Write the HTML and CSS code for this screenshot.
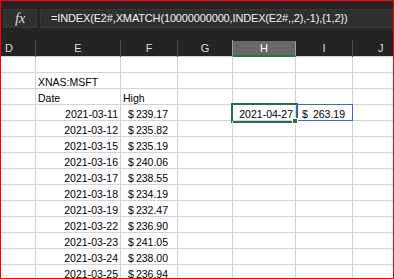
FILE: index.html
```html
<!DOCTYPE html>
<html>
<head>
<meta charset="utf-8">
<link rel="stylesheet" href="styles.css">
</head>
<body>
<div class="frame">
  <div class="formula-bar">
    <div class="fx">fx</div>
    <div class="formula">=INDEX(E2#,XMATCH(10000000000,INDEX(E2#,,2),-1),{1,2})</div>
  </div>
  <div class="sheet">
    <div class="row header">
      <div class="hc hd">D</div>
      <div class="hc">E</div>
      <div class="hc">F</div>
      <div class="hc pre-sel">G</div>
      <div class="hc sel">H</div>
      <div class="hc">I</div>
      <div class="hc hj">J</div>
    </div>
    <div class="row"><div class="c"></div><div class="c"></div><div class="c"></div><div class="c"></div><div class="c"></div><div class="c"></div><div class="c"></div></div>
    <div class="row"><div class="c"></div><div class="c left">XNAS:MSFT</div><div class="c"></div><div class="c"></div><div class="c"></div><div class="c"></div><div class="c"></div></div>
    <div class="row"><div class="c"></div><div class="c left">Date</div><div class="c left">High</div><div class="c"></div><div class="c"></div><div class="c"></div><div class="c"></div></div>
    <div class="row"><div class="c"></div><div class="c date">2021-03-11</div><div class="c acc"><span>$</span><span>239.17</span></div><div class="c"></div>
      <div class="c date active">2021-04-27<div class="sel-box"></div><div class="handle"></div></div>
      <div class="c acc spill"><span>$</span><span>263.19</span><div class="spill-box"></div></div><div class="c"></div></div>
    <div class="row"><div class="c"></div><div class="c date">2021-03-12</div><div class="c acc"><span>$</span><span>235.82</span></div><div class="c"></div><div class="c"></div><div class="c"></div><div class="c"></div></div>
    <div class="row"><div class="c"></div><div class="c date">2021-03-15</div><div class="c acc"><span>$</span><span>235.19</span></div><div class="c"></div><div class="c"></div><div class="c"></div><div class="c"></div></div>
    <div class="row"><div class="c"></div><div class="c date">2021-03-16</div><div class="c acc"><span>$</span><span>240.06</span></div><div class="c"></div><div class="c"></div><div class="c"></div><div class="c"></div></div>
    <div class="row"><div class="c"></div><div class="c date">2021-03-17</div><div class="c acc"><span>$</span><span>238.55</span></div><div class="c"></div><div class="c"></div><div class="c"></div><div class="c"></div></div>
    <div class="row"><div class="c"></div><div class="c date">2021-03-18</div><div class="c acc"><span>$</span><span>234.19</span></div><div class="c"></div><div class="c"></div><div class="c"></div><div class="c"></div></div>
    <div class="row"><div class="c"></div><div class="c date">2021-03-19</div><div class="c acc"><span>$</span><span>232.47</span></div><div class="c"></div><div class="c"></div><div class="c"></div><div class="c"></div></div>
    <div class="row"><div class="c"></div><div class="c date">2021-03-22</div><div class="c acc"><span>$</span><span>236.90</span></div><div class="c"></div><div class="c"></div><div class="c"></div><div class="c"></div></div>
    <div class="row"><div class="c"></div><div class="c date">2021-03-23</div><div class="c acc"><span>$</span><span>241.05</span></div><div class="c"></div><div class="c"></div><div class="c"></div><div class="c"></div></div>
    <div class="row"><div class="c"></div><div class="c date">2021-03-24</div><div class="c acc"><span>$</span><span>238.00</span></div><div class="c"></div><div class="c"></div><div class="c"></div><div class="c"></div></div>
    <div class="row"><div class="c"></div><div class="c date">2021-03-25</div><div class="c acc"><span>$</span><span>236.94</span></div><div class="c"></div><div class="c"></div><div class="c"></div><div class="c"></div></div>
  </div>
</div>
</body>
</html>
```
FILE: styles.css
```css
html, body {
  margin: 0;
  padding: 0;
  background: #ffffff;
}
.frame {
  width: 394px;
  height: 279px;
  box-sizing: border-box;
  border: 1px solid #ff0000;
  overflow: hidden;
  background: #232323;
  font-family: "Liberation Sans", Arial, sans-serif;
}
.formula-bar {
  height: 39px;
  display: flex;
  align-items: flex-start;
  padding-top: 8px;
  padding-left: 2px;
  box-sizing: border-box;
  gap: 3px;
}
.fx {
  width: 34px;
  height: 19px;
  box-sizing: border-box;
  background: #2f2f2f;
  border: 1px solid #383838;
  color: #d6d6d6;
  font-family: "Liberation Serif", serif;
  font-style: italic;
  font-size: 15px;
  display: flex;
  align-items: center;
  justify-content: center;
  letter-spacing: -0.5px;
}
.formula {
  flex: 1;
  height: 19px;
  box-sizing: border-box;
  background: #2f2f2f;
  border: 1px solid #383838;
  border-right: none;
  color: #f2f2f2;
  font-size: 11px;
  letter-spacing: -0.15px;
  line-height: 17px;
  padding-left: 10px;
  white-space: nowrap;
  overflow: hidden;
}
.sheet {
  background: #ffffff;
}
.row {
  display: grid;
  grid-template-columns: 35px 85px 57px 55px 63px 57px 1fr;
  height: 16px;
}
.row.header {
  height: 17px;
  background: #232323;
  border-bottom: 1px solid #d4d4d4;
  box-sizing: border-box;
}
.hc {
  box-sizing: border-box;
  border-right: 1px solid #4a4a4a;
  color: #dcdcdc;
  font-size: 11px;
  line-height: 16px;
  text-align: center;
}
.hc.hd {
  text-align: left;
  padding-left: 4px;
}
.hc.hj {
  text-align: left;
  padding-left: 25px;
  border-right: none;
}
.hc.pre-sel {
  border-right-color: #9c9c9c;
}
.hc.sel {
  background: #686868;
  border-right-color: #9c9c9c;
  border-bottom: 2px solid #1f7a43;
  color: #ffffff;
  line-height: 14px;
  margin-top: 1px;
}
.c {
  box-sizing: border-box;
  border-right: 1px solid #d4d4d4;
  border-bottom: 1px solid #d4d4d4;
  font-size: 10.5px;
  line-height: 12px;
  color: #000000;
  display: flex;
  align-items: flex-end;
  white-space: nowrap;
  position: relative;
}
.c:last-child {
  border-right: none;
}
.c.left {
  padding-left: 2px;
}
.c.date {
  justify-content: flex-end;
  padding-right: 2px;
}
.c.acc {
  justify-content: space-between;
  padding-left: 7px;
  padding-right: 9px;
}
.c.acc.spill {
  padding-left: 6px;
  padding-right: 7px;
}
.sel-box {
  position: absolute;
  left: -2px;
  top: -2px;
  width: 67px;
  height: 20px;
  box-sizing: border-box;
  border: 2px solid #217346;
}
.handle {
  position: absolute;
  left: 59px;
  top: 13px;
  width: 6px;
  height: 6px;
  box-sizing: border-box;
  background: #217346;
  border: 1px solid #ffffff;
  z-index: 2;
}
.spill-box {
  position: absolute;
  left: 0;
  top: -1px;
  width: 57px;
  height: 17px;
  box-sizing: border-box;
  border: 1px solid #3a6cc0;
}
```
